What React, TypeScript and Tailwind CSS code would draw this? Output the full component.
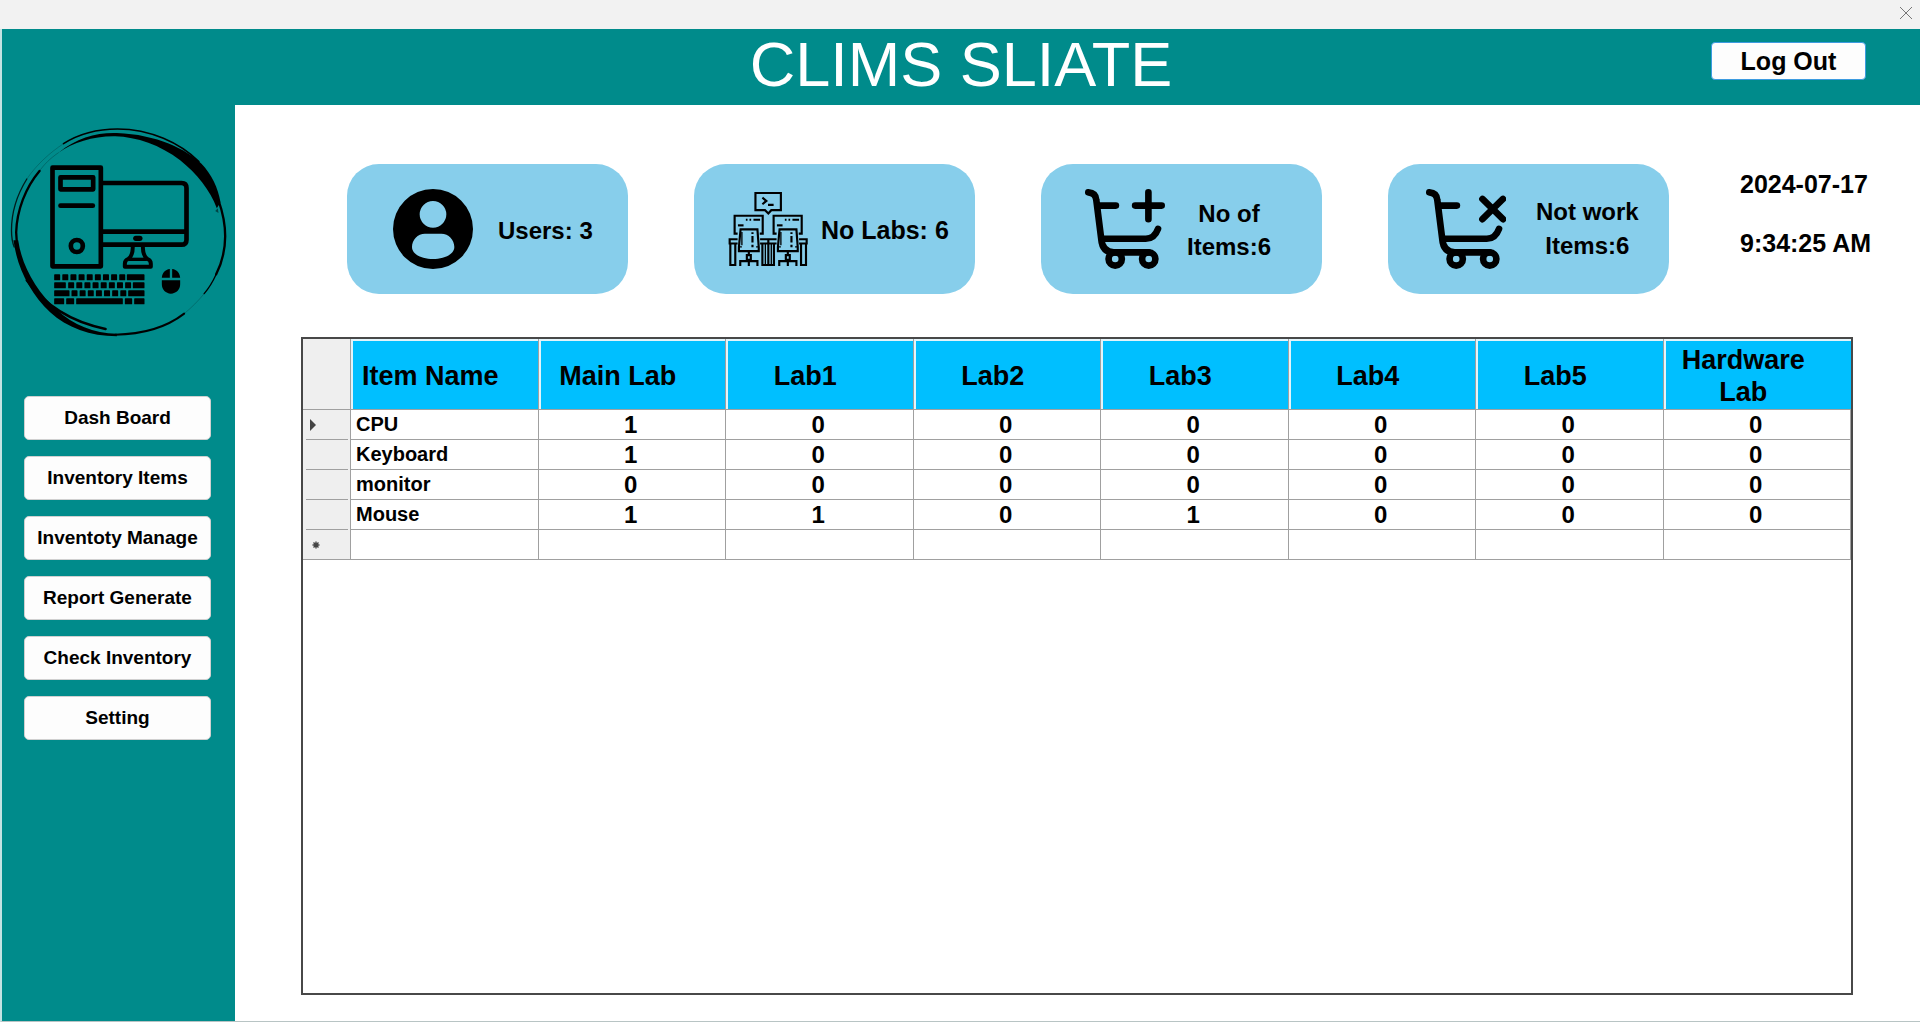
import React from "react";

const navItems = [
  "Dash Board",
  "Inventory Items",
  "Inventoty Manage",
  "Report Generate",
  "Check Inventory",
  "Setting",
];

const columns = ["Item Name", "Main Lab", "Lab1", "Lab2", "Lab3", "Lab4", "Lab5", "Hardware Lab"];

const rows: { name: string; counts: number[] }[] = [
  { name: "CPU", counts: [1, 0, 0, 0, 0, 0, 0] },
  { name: "Keyboard", counts: [1, 0, 0, 0, 0, 0, 0] },
  { name: "monitor", counts: [0, 0, 0, 0, 0, 0, 0] },
  { name: "Mouse", counts: [1, 1, 0, 1, 0, 0, 0] },
];

function ComputerLogo() {
  const shortKeys = (y: number, from: number, count: number) =>
    Array.from({ length: count }, (_, i) => (
      <rect key={`${y}-${i}`} x={from + i * 24.4} y={y} width="18" height="18" rx="2" />
    ));
  return (
    <svg viewBox="30 80 650 630" className="h-[210px] w-[217px]" role="img" aria-label="Computer lab logo">
      {/* brushed ring */}
      <g fill="none" stroke="#000" strokeLinecap="round">
        <path d="M190 130C240 98 300 86 352 86C450 86 540 128 596 184" strokeWidth="5" />
        <path d="M190 130C150 156 108 194 80 236" strokeWidth="2" opacity="0.3" />
        <path d="M80 236C50 284 34 340 34 390C34 410 36 425 42 440" strokeWidth="4" opacity="0.8" />
        <path d="M118 212C76 262 50 330 48 396C48 430 52 450 60 480" strokeWidth="7" />
        <path d="M175 157C150 174 132 192 118 212" strokeWidth="2" opacity="0.35" />
        <path d="M655 300C680 370 684 450 648 522" strokeWidth="7" />
        <path d="M648 522C638 544 628 562 612 580" strokeWidth="4" />
        <path d="M612 580C594 602 574 622 552 640" strokeWidth="2" opacity="0.3" />
        <path d="M552 640C500 680 430 702 345 703" strokeWidth="6" />
        <path d="M80 540C130 610 210 664 316 686" strokeWidth="8" />
      </g>
      <path d="M175 157C230 112 290 96 350 98C470 102 560 148 604 190C634 222 654 262 661 306L650 324C630 270 590 220 540 180C480 134 410 110 345 108C280 107 220 126 175 157Z" />
      <path d="M40 420C50 500 90 580 150 636C200 682 270 708 350 708L350 700C280 698 220 674 170 628C110 574 66 500 54 420Z" />
      <path d="M645 332l8-8 2 14z" opacity="0.5" />
      {/* monitor */}
      <g fill="none" stroke="#000" strokeWidth="14">
        <path d="M306 248H544Q559 248 559 263V418Q559 433 544 433H306" />
        <path d="M306 394H559" />
        <path d="M398 438C398 456 394 470 384 476Q374 480 374 490V499H452V490Q452 480 442 476C432 470 428 456 428 438" strokeWidth="12" strokeLinejoin="round" />
        <path d="M386 477H440" strokeWidth="10" />
      </g>
      <rect x="399" y="406" width="28" height="16" rx="8" />
      {/* tower */}
      <g fill="none" stroke="#000" strokeWidth="14" strokeLinejoin="round">
        <rect x="157" y="202" width="145" height="296" />
        <rect x="181" y="231" width="98" height="36" />
        <path d="M181 316H278" strokeLinecap="round" />
        <circle cx="230" cy="437" r="18" />
      </g>
      {/* keyboard */}
      {shortKeys(522, 162, 9)}
      <rect x="380" y="522" width="53" height="18" rx="2" />
      <rect x="162" y="546" width="35" height="18" rx="2" />
      {shortKeys(546, 204, 8)}
      <rect x="398" y="546" width="35" height="18" rx="2" />
      <rect x="162" y="570" width="46" height="18" rx="2" />
      {shortKeys(570, 214, 7)}
      <rect x="384" y="570" width="49" height="18" rx="2" />
      <rect x="162" y="594" width="30" height="18" rx="2" />
      <rect x="198" y="594" width="24" height="18" rx="2" />
      <rect x="228" y="594" width="140" height="18" rx="2" />
      <rect x="374" y="594" width="22" height="18" rx="2" />
      <rect x="402" y="594" width="31" height="18" rx="2" />
      {/* mouse */}
      <path d="M509 506V532H485C486 518 495 508 509 506ZM516 506C530 508 539 518 540 532H516ZM485 540H540V552C540 568 528 580 512 580C497 580 485 568 485 552Z" />
    </svg>
  );
}

function UserIcon() {
  return (
    <svg viewBox="0 0 240 240" className="h-20 w-20 shrink-0" aria-hidden="true">
      <path
        fillRule="evenodd"
        d="M120 0A120 120 0 1 1 120 240A120 120 0 1 1 120 0ZM120 36A40 40 0 1 0 120 116A40 40 0 1 0 120 36ZM96 134C74 134 57 152 57 174C57 198 90 210 120 210C150 210 184 198 184 174C184 152 167 134 145 134Z"
      />
    </svg>
  );
}

function Workstation({ x }: { x: number }) {
  return (
    <g transform={`translate(${x} 0)`}>
      {/* screen */}
      <path d="M144 235H135V181H220V235H211" />
      <path d="M145 210H162" />
      <path d="M169 193H174M180 193H185M192 193H212" />
      {/* chair */}
      <path d="M153 222H204L208 276V288H148V276Z" />
      <path d="M157 230V270M148 275H157M200 275H208" strokeWidth="4" />
      <path d="M189 231V236M189 242V262M189 269V276" />
      <path d="M178 290V300M172 300H184V314H172ZM152 333V318H204V333M178 314V333" />
    </g>
  );
}

function LabsIcon() {
  return (
    <svg viewBox="115 106 242 230" className="h-[76px] w-20 shrink-0" aria-hidden="true">
      <g fill="none" stroke="#000" strokeWidth="6.5">
        <path d="M198 112H275V164H246L237 174L227 164H198Z" />
        <path d="M219 126L231 136L219 146M236 148H253" />
        <Workstation x={0} />
        <Workstation x={118} />
        {/* desks */}
        <path d="M144 252H120V265H144M212 252H262M212 265H262M330 252H353V265H330" />
        <path d="M122 265V330H137V265M336 265V330H351V265" />
        <path d="M219 265V330H254V265M237 252V330" />
        <path d="M228 265V330M246 265V330" strokeWidth="4" />
      </g>
    </svg>
  );
}

function CartIcon({ mark }: { mark: "plus" | "cross" }) {
  return (
    <svg viewBox="149 101 241 241" className="h-20 w-20 shrink-0" aria-hidden="true">
      <g fill="none" stroke="#000" strokeWidth="20" strokeLinecap="round" strokeLinejoin="round">
        <path d="M159 111C174 112 182 120 183 134L198 252C200 276 210 292 236 292H340" />
        <path d="M188 151H242" />
        <path d="M200 251H332C352 251 362 240 369 221" />
        <circle cx="240" cy="312" r="20" />
        <circle cx="341" cy="312" r="20" />
        {mark === "plus" ? (
          <path d="M300 151H380M340 111V192" />
        ) : (
          <path d="M319 131L381 192M381 131L319 192" />
        )}
      </g>
    </svg>
  );
}

function StatCard({ className, children }: { className: string; children: React.ReactNode }) {
  return (
    <section className={`flex h-[130px] items-center rounded-[32px] bg-[#87ceeb] font-bold ${className}`}>
      {children}
    </section>
  );
}

export default function App() {
  return (
    <div className="flex min-h-screen flex-col bg-white font-['Liberation_Sans',Arial,sans-serif] text-black">
      <div className="flex h-[29px] items-start justify-end bg-[#f2f2f2] pr-2">
        <button type="button" aria-label="Close" className="flex h-[26px] w-3">
          <svg viewBox="0 0 12 12" className="m-auto h-3 w-3" aria-hidden="true">
            <path d="M0 0L12 12M12 0L0 12" stroke="#777" strokeWidth="1" />
          </svg>
        </button>
      </div>

      <div className="flex grow flex-col border-b border-l-2 border-b-[#b8c4c4] border-l-[#c4e2e2]">
        <header className="grid h-[76px] grid-cols-[1fr_auto_1fr] items-start bg-[#008b8b]">
          <h1 className="col-start-2 text-[63px] leading-[70px] text-white">CLIMS SLIATE</h1>
          <button
            type="button"
            className="mt-[13px] mr-[54px] h-[38px] w-[155px] justify-self-end rounded-[4px] border border-[#3c9be0] bg-[#fdfdfd] text-[25px] leading-9 font-bold"
          >
            Log Out
          </button>
        </header>

        <div className="flex grow">
          <aside className="w-[233px] shrink-0 bg-[#008b8b] pt-[22px]">
            <div className="pl-2">
              <ComputerLogo />
            </div>
            <nav className="mt-[59px] flex flex-col gap-4 pr-6 pl-[22px]">
              {navItems.map((item) => (
                <button
                  key={item}
                  type="button"
                  className="h-11 rounded-[5px] border border-[#d0d0d0] bg-[#fdfdfd] text-[19px] font-bold whitespace-nowrap"
                >
                  {item}
                </button>
              ))}
            </nav>
          </aside>

          <main className="flex grow flex-col pt-[59px]">
            <div className="flex pl-28">
              <div className="grid grow grid-cols-4 gap-[66px]">
                <StatCard className="gap-[25px] pl-[46px] text-2xl">
                  <UserIcon />
                  <p className="pt-1">Users: 3</p>
                </StatCard>
                <StatCard className="gap-[13px] pl-[34px] text-[25px]">
                  <LabsIcon />
                  <p className="pt-1">No Labs: 6</p>
                </StatCard>
                <StatCard className="gap-[22px] pl-11 text-2xl">
                  <CartIcon mark="plus" />
                  <p className="pt-0.5 text-center leading-[33px]">
                    No of
                    <br />
                    Items:6
                  </p>
                </StatCard>
                <StatCard className="gap-[30px] pl-[38px] text-2xl">
                  <CartIcon mark="cross" />
                  <p className="text-center leading-[34px]">
                    Not work
                    <br />
                    Items:6
                  </p>
                </StatCard>
              </div>
              <div className="flex w-[251px] shrink-0 flex-col gap-[29px] pt-[5px] pl-[71px] text-[25px] leading-[30px] font-bold">
                <time dateTime="2024-07-17">2024-07-17</time>
                <time dateTime="09:34:25">9:34:25 AM</time>
              </div>
            </div>

            <div className="mt-[43px] mr-[67px] mb-[26px] ml-[66px] grow border-2 border-[#484848]">
              <table className="w-full table-fixed border-separate border-spacing-0 font-bold">
                <thead>
                  <tr className="h-[71px]">
                    <th aria-label="Row" className="w-12 border-r border-b border-[#a0a0a0] bg-[#efefef] p-0" />
                    {columns.map((name) => (
                      <th
                        key={name}
                        scope="col"
                        className="border-r border-b border-[#a0a0a0] bg-[#00bfff] pt-[3px] pr-7 pb-0 pl-0 text-[27px] leading-8 shadow-[inset_2px_2px_0_#e4f4fa] last:border-r-0"
                      >
                        {name}
                      </th>
                    ))}
                  </tr>
                </thead>
                <tbody>
                  {rows.map((row, index) => (
                    <tr key={row.name} className="h-[30px]">
                      <td className="border-r border-[#a0a0a0] bg-[#efefef] p-0">
                        <div className="mr-0.5 ml-[3px] flex h-[30px] items-center border-b border-[#a0a0a0] pl-1">
                          {index === 0 && (
                            <svg viewBox="0 0 6 12" className="h-3 w-1.5" aria-hidden="true">
                              <path d="M0 0L6 6L0 12Z" fill="#444" />
                            </svg>
                          )}
                        </div>
                      </td>
                      <th
                        scope="row"
                        className="border-r border-b border-[#a0a0a0] py-0 pr-0 pl-[5px] text-left text-xl leading-[29px]"
                      >
                        {row.name}
                      </th>
                      {row.counts.map((count, i) => (
                        <td
                          key={i}
                          className="border-r border-b border-[#a0a0a0] py-0 pr-0.5 pl-0 text-center text-2xl leading-[29px]"
                        >
                          {count}
                        </td>
                      ))}
                    </tr>
                  ))}
                  <tr className="h-[30px]">
                    <td className="border-r border-b border-[#a0a0a0] bg-[#efefef] p-0">
                      <svg viewBox="0 0 8 8" className="ml-[9px] h-2 w-2" aria-hidden="true">
                        <path d="M4 0.5V7.5M0.5 4H7.5M1.5 1.5L6.5 6.5M6.5 1.5L1.5 6.5" stroke="#444" strokeWidth="1.4" />
                      </svg>
                    </td>
                    {columns.map((name) => (
                      <td key={name} className="border-r border-b border-[#a0a0a0] p-0" />
                    ))}
                  </tr>
                </tbody>
              </table>
            </div>
          </main>
        </div>
      </div>
    </div>
  );
}
